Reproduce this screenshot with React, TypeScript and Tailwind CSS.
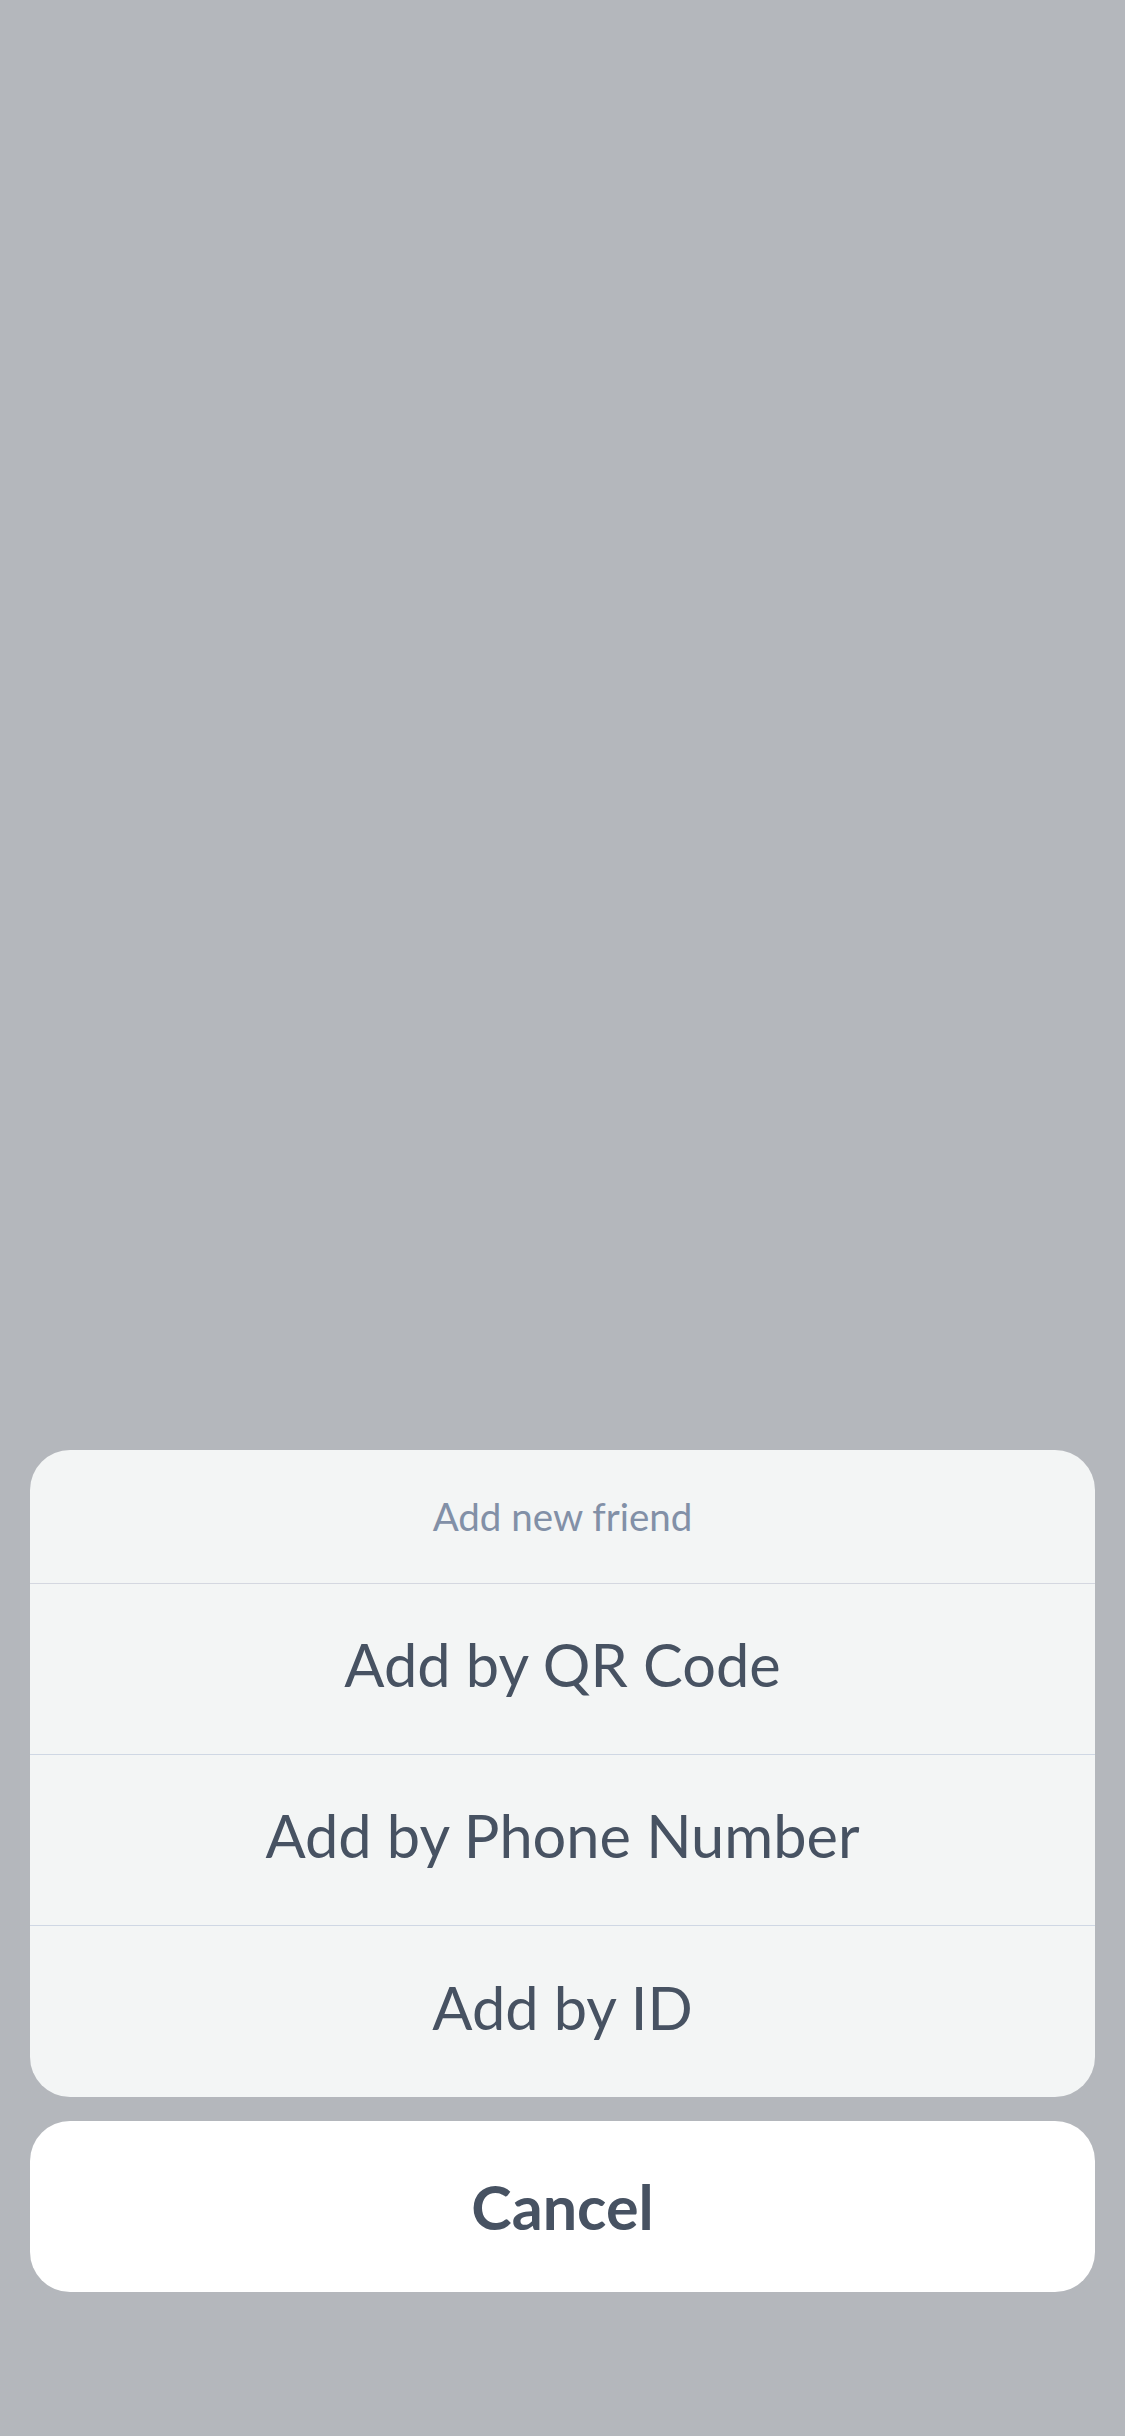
import React from 'react';

const options = ['Add by QR Code', 'Add by Phone Number', 'Add by ID'];

const App = () => {
  return (
    <div
      className="flex h-[2436px] w-full flex-col justify-end bg-[#b4b7bc] px-[30px] pb-[144px]"
      style={{ fontFamily: 'Lato, "Noto Sans", sans-serif' }}
    >
      {/* action sheet */}
      <div className="overflow-hidden rounded-[40px] bg-[#f3f5f5]">
        <div className="flex h-[134px] items-center justify-center border-b border-[#d4d7e0] text-[38.5px] text-[#8290a7]">
          Add new friend
        </div>
        {options.map((label, i) => (
          <button
            key={label}
            className={`flex h-[171px] w-full items-center justify-center pb-[8px] text-[59.5px] text-[#475262] ${
              i < options.length - 1 ? 'border-b border-[#cfd7e4]' : ''
            }`}
          >
            {label}
          </button>
        ))}
      </div>

      <button className="mt-[24px] flex h-[171px] w-full items-center justify-center rounded-[40px] bg-white text-[61px] font-bold text-[#475262]">
        Cancel
      </button>
    </div>
  );
};

export default App;
